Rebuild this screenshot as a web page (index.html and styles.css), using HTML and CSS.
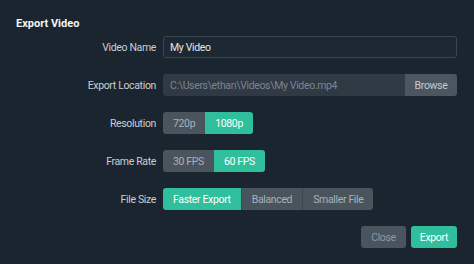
FILE: index.html
```html
<!DOCTYPE html>
<html lang="en">
<head>
    <meta charset="UTF-8">
    <meta name="viewport" content="width=device-width, initial-scale=1.0">
    <title>Export Video</title>
    <link rel="stylesheet" href="styles.css">
</head>
<body>
    <div class="dialog">
        <h1>Export Video</h1>
        <div class="form">
            <label class="label">Video Name</label>
            <input type="text" class="text-input" value="My Video">

            <label class="label">Export Location</label>
            <div class="path-row">
                <input type="text" class="path-input" value="C:\Users\ethan\Videos\My Video.mp4" readonly>
                <button class="browse-btn">Browse</button>
            </div>

            <label class="label">Resolution</label>
            <div class="segments">
                <span class="seg">720p</span>
                <span class="seg active">1080p</span>
            </div>

            <label class="label">Frame Rate</label>
            <div class="segments">
                <span class="seg">30 FPS</span>
                <span class="seg active">60 FPS</span>
            </div>

            <label class="label">File Size</label>
            <div class="segments">
                <span class="seg active">Faster Export</span>
                <span class="seg">Balanced</span>
                <span class="seg">Smaller File</span>
            </div>
        </div>
        <div class="actions">
            <button class="btn close-btn">Close</button>
            <button class="btn export-btn">Export</button>
        </div>
    </div>
</body>
</html>
```

FILE: styles.css
```css
body {
    font-family: Roboto, "Liberation Sans", sans-serif;
    background-color: #1b2530;
    margin: 0;
    padding: 0;
    color: #d5dade;
}
.dialog {
    padding: 17px 17px 0 16px;
}
h1 {
    font-size: 11px;
    font-weight: bold;
    color: #f2f4f5;
    margin: 0 0 6px 0;
    line-height: 13px;
}
.form {
    display: grid;
    grid-template-columns: 140px 1fr;
    column-gap: 7px;
    row-gap: 16px;
    align-items: center;
}
.label {
    font-size: 10.5px;
    letter-spacing: -0.35px;
    text-align: right;
    color: #c9ced3;
}
.text-input {
    height: 22px;
    box-sizing: border-box;
    background-color: #1e2833;
    border: 1px solid #3a4550;
    border-radius: 3px;
    color: #e3e6e9;
    font-family: inherit;
    font-size: 10.5px;
    letter-spacing: -0.35px;
    padding: 0 6px;
    width: 100%;
    outline: none;
}
.path-row {
    display: flex;
    height: 22px;
}
.path-input {
    flex: 1;
    min-width: 0;
    box-sizing: border-box;
    background-color: #2f3a45;
    border: none;
    border-radius: 3px 0 0 3px;
    color: #7b858f;
    font-family: inherit;
    font-size: 10.5px;
    letter-spacing: -0.35px;
    padding: 0 7px;
    outline: none;
}
.browse-btn {
    width: 52px;
    background-color: #4b5661;
    border: none;
    border-radius: 0 3px 3px 0;
    color: #c5cbd0;
    font-family: inherit;
    font-size: 10.5px;
    letter-spacing: -0.35px;
    padding: 0;
}
.segments {
    display: flex;
    height: 22px;
}
.seg {
    display: flex;
    align-items: center;
    padding: 0 10px;
    background-color: #4a545d;
    color: #a9b1b8;
    font-size: 10.5px;
    letter-spacing: -0.35px;
}
.seg:first-child {
    border-radius: 3px 0 0 3px;
}
.seg:last-child {
    border-radius: 0 3px 3px 0;
}
.seg + .seg {
    border-left: 1px solid #3c464f;
}
.seg.active {
    background-color: #2fbf9c;
    color: #ffffff;
    border-left: none;
}
.actions {
    display: flex;
    justify-content: flex-end;
    gap: 5px;
    margin-top: 16px;
    padding-right: 0;
}
.btn {
    height: 22px;
    border: none;
    border-radius: 3px;
    font-family: inherit;
    font-size: 10.5px;
    letter-spacing: -0.35px;
    padding: 0 10px;
}
.close-btn {
    background-color: #4a545e;
    color: #8e979e;
}
.export-btn {
    background-color: #2fbf9c;
    color: #ffffff;
    padding: 0 9px;
}
```
